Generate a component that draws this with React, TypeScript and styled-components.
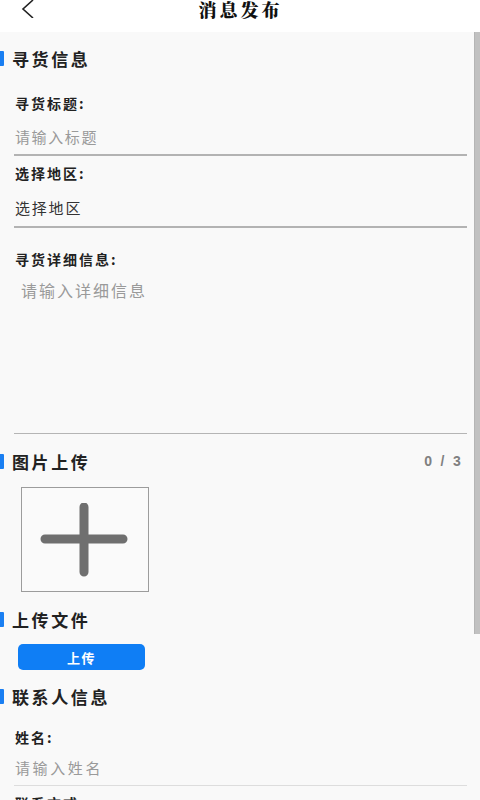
import React from "react";
import styled, { createGlobalStyle } from "styled-components";

const Global = createGlobalStyle`
  html, body { margin: 0; padding: 0; background: #f9f9f9; }
  body { font-family: "Noto Sans CJK SC", "Noto Sans", sans-serif; }
  * { box-sizing: border-box; }
`;

const Page = styled.div`
  width: 480px;
  height: 800px;
  overflow: hidden;
  display: flex;
  flex-direction: column;
  background: #f9f9f9;
`;

const Header = styled.div`
  height: 32px;
  flex: none;
  background: #ffffff;
  display: flex;
  align-items: flex-start;
`;

const BackBtn = styled.div`
  width: 40px;
  height: 18px;
  padding-left: 21px;
  display: flex;
  align-items: flex-start;
`;

const Title = styled.div`
  flex: 1;
  text-align: center;
  margin-right: 40px;
  margin-top: -1px;
  font-family: "Noto Serif CJK SC", "Noto Sans CJK SC", serif;
  font-size: 18px;
  line-height: 21px;
  font-weight: 900;
  letter-spacing: 3px;
  color: #111;
  padding-left: 1px;
`;

const Main = styled.div`
  flex: 1;
  display: flex;
  flex-direction: row;
  min-height: 0;
`;

const Content = styled.div`
  flex: 1;
  display: flex;
  flex-direction: column;
  padding-right: 7px;
  & > * { flex-shrink: 0; }
`;

const Track = styled.div`
  width: 6px;
  flex: none;
`;

const Thumb = styled.div`
  height: 602px;
  background: #c1c1c1;
  border-left: 1px solid #b5b5b5;
`;

const SectionHead = styled.div<{ $mt: number }>`
  margin-top: ${(p) => p.$mt}px;
  height: 24px;
  display: flex;
  align-items: center;
  padding-right: 4px;
`;

const Bar = styled.span`
  width: 4px;
  height: 15px;
  background: #1a7ff2;
  border-radius: 0 1px 1px 0;
`;

const SectionText = styled.span`
  margin-left: 8px;
  font-size: 17px;
  font-weight: 700;
  letter-spacing: 2.6px;
  color: #222;
  flex: 1;
`;

const Counter = styled.span`
  font-family: "Liberation Sans", Arial, sans-serif;
  font-size: 14px;
  font-weight: 700;
  color: #808080;
  letter-spacing: 2.3px;
`;

const Label = styled.div<{ $mt: number }>`
  margin-top: ${(p) => p.$mt}px;
  padding-left: 15px;
  height: 20px;
  line-height: 20px;
  font-size: 14px;
  font-weight: 700;
  letter-spacing: 2px;
  color: #222;
`;

const Field = styled.div<{ $mt: number; $muted?: boolean; $spacing?: number }>`
  margin-top: ${(p) => p.$mt}px;
  padding-left: 15px;
  height: 22px;
  line-height: 22px;
  font-size: 15px;
  letter-spacing: ${(p) => p.$spacing ?? 1.6}px;
  color: ${(p) => (p.$muted ? "#9a9a9a" : "#333")};
`;

const TextArea = styled.div`
  margin-top: 10px;
  height: 154px;
  padding-left: 21px;
  font-size: 16px;
  line-height: 22px;
  letter-spacing: 2px;
  color: #9a9a9a;
`;

const Divider = styled.div<{ $mt: number; $h: number; $color: string }>`
  margin-top: ${(p) => p.$mt}px;
  margin-left: 14px;
  height: ${(p) => p.$h}px;
  background: ${(p) => p.$color};
`;

const UploadBox = styled.div`
  margin-top: 14px;
  margin-left: 21px;
  width: 128px;
  height: 105px;
  border: 1px solid #9c9c9c;
  background: #fafafa;
  display: flex;
  align-items: center;
  justify-content: center;
`;

const UploadButton = styled.button`
  margin-top: 13px;
  margin-left: 18px;
  width: 127px;
  height: 26px;
  border: none;
  border-radius: 5px;
  background: #0f7ef5;
  color: #fff;
  font-family: "Noto Sans CJK SC", sans-serif;
  font-size: 13px;
  font-weight: 700;
  letter-spacing: 1.5px;
  padding: 0;
`;

export default function App() {
  return (
    <Page>
      <Global />
      <Header>
        <BackBtn>
          <svg width="14" height="18" viewBox="0 0 14 18">
            <path d="M12 0 L2 9 L12 18" fill="none" stroke="#222" strokeWidth="1.6" />
          </svg>
        </BackBtn>
        <Title>消息发布</Title>
      </Header>
      <Main>
        <Content>
          <SectionHead $mt={14}>
            <Bar />
            <SectionText>寻货信息</SectionText>
          </SectionHead>
          <Label $mt={23}>寻货标题:</Label>
          <Field $mt={13} $muted>请输入标题</Field>
          <Divider $mt={6} $h={2} $color="#b3b3b3" />
          <Label $mt={7}>选择地区:</Label>
          <Field $mt={14} $spacing={1.8}>选择地区</Field>
          <Divider $mt={7} $h={2} $color="#b3b3b3" />
          <Label $mt={21}>寻货详细信息:</Label>
          <TextArea>请输入详细信息</TextArea>
          <Divider $mt={0} $h={1} $color="#b5b5b5" />
          <SectionHead $mt={15}>
            <Bar />
            <SectionText>图片上传</SectionText>
            <Counter>0 / 3</Counter>
          </SectionHead>
          <UploadBox>
            <svg width="90" height="74" viewBox="0 0 90 74">
              <path d="M5 36 H83 M44 4 V69" stroke="#6f6f6f" strokeWidth="9" strokeLinecap="round" fill="none" />
            </svg>
          </UploadBox>
          <SectionHead $mt={15}>
            <Bar />
            <SectionText>上传文件</SectionText>
          </SectionHead>
          <UploadButton>上传</UploadButton>
          <SectionHead $mt={14}>
            <Bar />
            <SectionText>联系人信息</SectionText>
          </SectionHead>
          <Label $mt={19}>姓名:</Label>
          <Field $mt={10} $muted $spacing={2.6}>请输入姓名</Field>
          <Divider $mt={6} $h={1} $color="#dddddd" />
          <Label $mt={7}>联系方式:</Label>
        </Content>
        <Track>
          <Thumb />
        </Track>
      </Main>
    </Page>
  );
}
